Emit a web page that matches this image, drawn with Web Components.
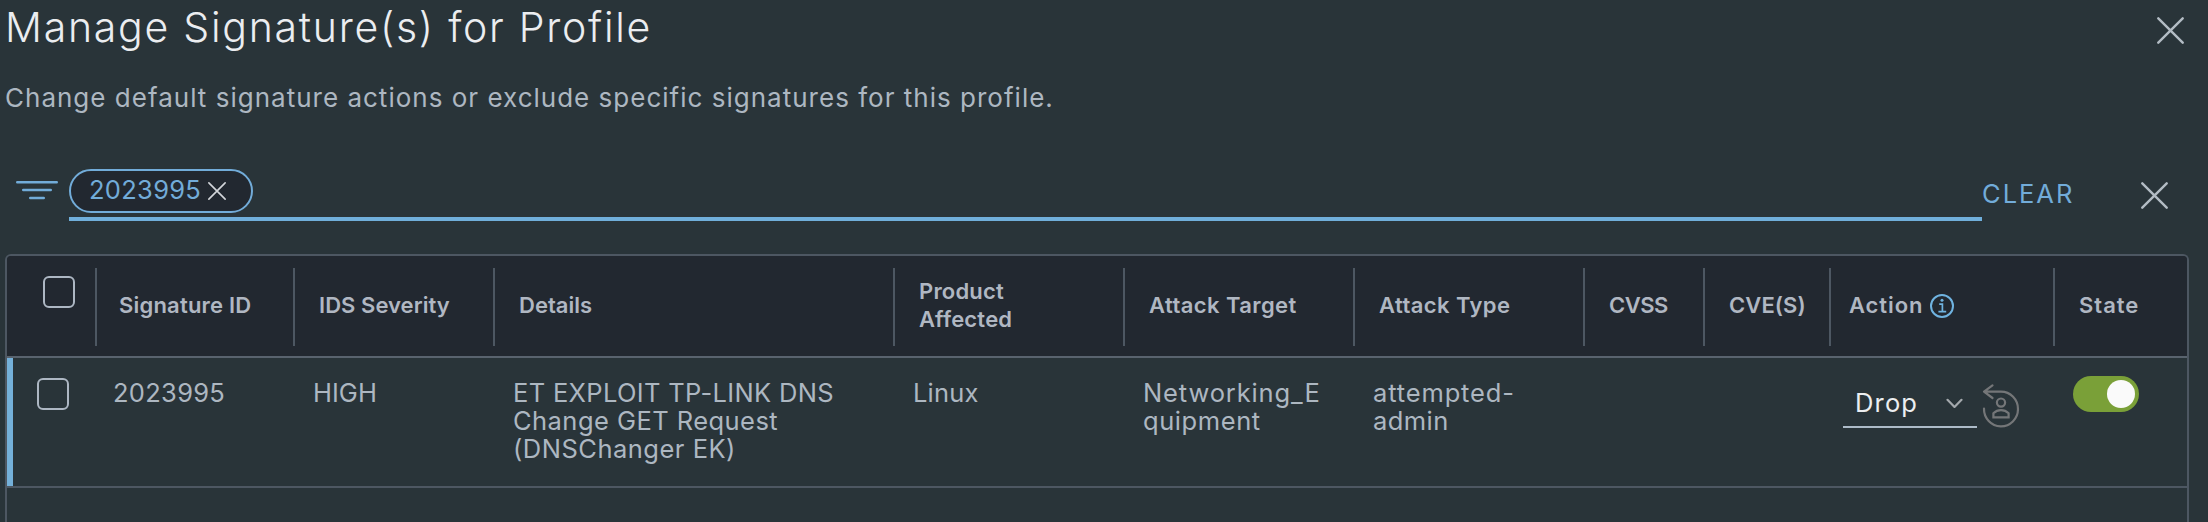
<!DOCTYPE html>
<html lang="en">
<head>
<meta charset="utf-8">
<title>Manage Signature(s) for Profile</title>
<style>
html,body{margin:0;height:522px;overflow:hidden;background:#293439;
--blue:#72acd9;--text:#adb7c1;--line:#4d5762;--dark:#222830;
font-family:Inter,"Liberation Sans",sans-serif;color:var(--text)}
</style>
</head>
<body>
<profile-signatures></profile-signatures>
<script>
const define = (name, html) => {
  const t = document.createElement('template');
  t.innerHTML = html;
  customElements.define(name, class extends HTMLElement {
    constructor() {
      super();
      this.attachShadow({mode: 'open'}).append(t.content.cloneNode(true));
    }
  });
};

define('close-icon', `<style>
:host{display:block;width:27px;height:27px;color:#b3bcc4}
svg{display:block;width:100%;height:100%}
</style><svg viewBox="0 0 27 27" fill="none" stroke="currentColor" stroke-width="2.4" stroke-linecap="round"><path d="M1.3 1.3l24.4 24.4M25.7 1.3L1.3 25.7"/></svg>`);

define('check-box', `<style>
:host{display:block;box-sizing:border-box;width:32px;height:32px;border:2px solid #adb7c3;border-radius:6px}
</style>`);

define('panel-header', `<style>
:host{display:flex;justify-content:space-between;height:150px;box-sizing:border-box;padding:0 24px 0 5px}
h1{margin:0;font-size:41px;line-height:50px;font-weight:300;letter-spacing:1.74px;color:#ebedf0;padding-top:2px;white-space:nowrap}
p{margin:0;padding-top:30px;font-size:26px;line-height:32px;letter-spacing:1.01px;white-space:nowrap}
close-icon{margin-top:16.5px}
</style><div><h1><slot name="title"></slot></h1><p><slot></slot></p></div><close-icon></close-icon>`);

define('filter-chip', `<style>
:host{display:flex;box-sizing:border-box;width:184px;height:44px;border:2px solid var(--blue);border-radius:22px;background:var(--dark);color:var(--blue);font-size:25.5px;line-height:38px;letter-spacing:.3px;padding-left:18px}
span{width:119px}
close-icon{width:18px;height:18px;margin-top:11px;color:#d3d6da}
</style><span><slot></slot></span><close-icon></close-icon>`);

define('filter-bar', `<style>
:host{display:flex;height:104px;box-sizing:border-box;padding:19px 40px 0 16px}
svg{display:block;width:42px;height:20px;margin:12px 11px 0 0}
.field{width:1913px;height:52px;box-sizing:border-box;border-bottom:4px solid #70afdb}
.clear{flex:1;padding:9px 0 0 0;font-size:25.5px;line-height:32px;letter-spacing:2px;color:var(--blue)}
close-icon{margin-top:12.5px}
</style><svg viewBox="0 0 42 20" stroke="#72acd9" stroke-width="2.4" stroke-linecap="round"><path d="M1.2 1.2h39.6M7.2 9h27.6M14.2 17h13.6"/></svg>
<div class="field"><slot></slot></div><div class="clear">CLEAR</div><close-icon></close-icon>`);

define('info-icon', `<style>
:host{display:block;width:24px;height:24px}svg{display:block}
</style><svg width="24" height="24" fill="none" stroke="#6fb3e0" stroke-width="2"><circle cx="12" cy="12" r="11"/><path d="M9.2 10.2h3.2v7.3M8.4 17.6h7.8" stroke-width="1.7"/><circle cx="12" cy="6.3" r="1.5" fill="#6fb3e0" stroke="none"/></svg>`);

define('header-cell', `<style>
:host{display:flex;align-items:center;box-sizing:border-box;height:78px;margin-top:12px;border-right:2px solid var(--line);padding:0 0 4px 24px;font-size:22px;line-height:28px;font-weight:600;color:#b0b7c2;letter-spacing:.2px;white-space:nowrap}
:host([last]){border-right:0}
:host([select]){padding-left:36px;align-items:flex-start}
::slotted(check-box){margin-top:8px}
</style><slot></slot>`);

define('body-cell', `<style>
:host{display:block;font-size:25.5px;line-height:28px;padding:21px 0 0 18px;letter-spacing:.45px;white-space:nowrap}
</style><slot></slot>`);

define('action-select', `<style>
:host{display:flex;box-sizing:border-box;width:134px;height:44px;margin-top:5px;border-bottom:2px solid #adbbc8;color:#eceef0;padding:0 14px 0 12px;justify-content:space-between;font-size:25.5px;line-height:37px;letter-spacing:1.15px}
svg{display:block;margin-top:14px}
</style><slot></slot><svg width="17" height="11" fill="none" stroke="#a3a8ac" stroke-width="2.2" stroke-linecap="round" stroke-linejoin="round"><path d="M1.5 1.8l7 7.1 7-7.1"/></svg>`);

define('revert-icon', `<style>
:host{display:block;width:38px;height:46px;margin:4px 0 0 5px}svg{display:block}
</style><svg width="38" height="46" fill="none" stroke="#747678" stroke-width="2.2" stroke-linecap="round" stroke-linejoin="round"><path d="M2 25.5A17 17.3 0 1 0 19 8.7H2.5M10.5 2.4L2 8.7l8.5 6.3"/><circle cx="19" cy="19.6" r="4.1"/><path stroke-linejoin="miter" d="M11.4 34.4v-4.2c4.2-4.1 11-4.1 15.2 0v4.2z"/></svg>`);

define('toggle-switch', `<style>
:host{display:flex;justify-content:flex-end;box-sizing:border-box;width:66px;height:36px;padding:4px;border-radius:18px;background:#7aa038}
i{width:28px;height:28px;border-radius:50%;background:#fafafa}
</style><i></i>`);

define('data-row', `<style>
:host{display:grid;grid-template-columns:88px 200px 200px 400px 230px 230px 230px 120px 126px 224px 132px;height:128px;border-bottom:2px solid var(--line);box-shadow:inset 6px 0 #74b0d9}
</style><slot></slot>`);

define('data-grid', `<style>
:host{display:block;box-sizing:border-box;width:2184px;height:290px;margin-left:5px;border:2px solid var(--line);border-bottom:0;border-radius:6px 6px 0 0;overflow:hidden}
.head{display:grid;grid-template-columns:90px 198px 200px 400px 230px 230px 230px 120px 126px 224px 132px;height:100px;background:var(--dark);border-bottom:2px solid #59636e}
</style><div class="head"><slot name="head"></slot></div><slot></slot>`);

define('profile-signatures', `<style>
:host{display:block;box-sizing:border-box;width:2208px;height:522px;overflow:hidden}
.act{display:flex;padding:21px 0 0 12px}
.tog{padding:18px 0 0 18px}
.sel{padding:20px 0 0 30px}
info-icon{margin:2px 0 0 7px}
</style>
<panel-header><span slot="title">Manage Signature(s) for Profile</span>Change default signature actions or exclude specific signatures for this profile.</panel-header>
<filter-bar><filter-chip>2023995</filter-chip></filter-bar>
<data-grid>
<header-cell slot="head" select><check-box></check-box></header-cell>
<header-cell slot="head" style="padding-left:22px">Signature ID</header-cell>
<header-cell slot="head" style="letter-spacing:.05px">IDS Severity</header-cell>
<header-cell slot="head" style="letter-spacing:0">Details</header-cell>
<header-cell slot="head"><div>Product<br>Affected</div></header-cell>
<header-cell slot="head" style="letter-spacing:.42px">Attack Target</header-cell>
<header-cell slot="head" style="letter-spacing:.42px">Attack Type</header-cell>
<header-cell slot="head" style="letter-spacing:-.5px">CVSS</header-cell>
<header-cell slot="head" style="letter-spacing:.09px">CVE(S)</header-cell>
<header-cell slot="head" style="padding-left:18px;letter-spacing:.92px">Action<info-icon></info-icon></header-cell>
<header-cell slot="head" last style="letter-spacing:1px">State</header-cell>
<data-row>
<div class="sel"><check-box></check-box></div>
<body-cell style="letter-spacing:.3px">2023995</body-cell>
<body-cell style="letter-spacing:.02px">HIGH</body-cell>
<body-cell><span style="letter-spacing:.33px">ET EXPLOIT TP-LINK DNS</span><br>Change GET Request<br><span style="letter-spacing:.5px">(DNSChanger EK)</span></body-cell>
<body-cell style="letter-spacing:.19px">Linux</body-cell>
<body-cell><span style="letter-spacing:.87px">Networking_E</span><br><span style="letter-spacing:.58px">quipment</span></body-cell>
<body-cell><span style="letter-spacing:.86px">attempted-</span><br>admin</body-cell>
<body-cell></body-cell>
<body-cell></body-cell>
<div class="act"><action-select>Drop</action-select><revert-icon></revert-icon></div>
<div class="tog"><toggle-switch></toggle-switch></div>
</data-row>
</data-grid>`);
</script>
</body>
</html>
